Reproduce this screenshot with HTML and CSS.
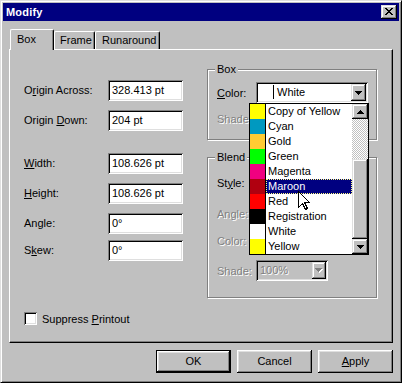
FILE: index.html
```html
<!DOCTYPE html>
<html>
<head>
<meta charset="utf-8">
<title>Modify</title>
<link rel="stylesheet" href="styles.css">
</head>
<body>
<div class="window">
  <div class="titlebar">
    <span class="title">Modify</span>
    <div class="close raised">
      <svg width="8" height="7" viewBox="0 0 8 7" shape-rendering="crispEdges"><path fill="#000" d="M0 0h2v1H0z M6 0h2v1H6z M1 1h2v1H1z M5 1h2v1H5z M2 2h4v1H2z M3 3h2v1H3z M2 4h4v1H2z M1 5h2v1H1z M5 5h2v1H5z M0 6h2v1H0z M6 6h2v1H6z"/></svg>
    </div>
  </div>

  <div class="tabs">
    <div class="tab tab-box active">Box</div>
    <div class="tab tab-frame">Frame</div>
    <div class="tab tab-run">Runaround</div>
  </div>

  <div class="panel">
    <div class="left">
      <div class="frow r1"><span class="flabel">O<u>r</u>igin Across:</span><div class="edit">328.413 pt</div></div>
      <div class="frow r2"><span class="flabel">Origin <u>D</u>own:</span><div class="edit">204 pt</div></div>
      <div class="frow r3"><span class="flabel"><u>W</u>idth:</span><div class="edit">108.626 pt</div></div>
      <div class="frow r4"><span class="flabel"><u>H</u>eight:</span><div class="edit">108.626 pt</div></div>
      <div class="frow r5"><span class="flabel">Angle:</span><div class="edit">0°</div></div>
      <div class="frow r6"><span class="flabel">S<u>k</u>ew:</span><div class="edit">0°</div></div>
      <div class="check-row">
        <div class="checkbox"></div>
        <span>Suppress <u>P</u>rintout</span>
      </div>
    </div>

    <div class="right">
      <div class="group box-group">
        <span class="legend">Box</span>
        <div class="grow g-color">
          <span class="glabel"><u>C</u>olor:</span>
          <div class="combo">
            <span class="combo-swatch"></span>
            <span class="combo-text">White</span>
            <span class="combo-btn raised">
              <svg width="7" height="4" viewBox="0 0 7 4" shape-rendering="crispEdges"><path fill="#000" d="M0 0h7v1H0z M1 1h5v1H1z M2 2h3v1H2z M3 3h1v1H3z"/></svg>
            </span>
          </div>
        </div>
        <div class="grow g-shade">
          <span class="glabel disabled">Shade:</span>
          <div class="combo combo-dis"></div>
        </div>
      </div>

      <div class="group blend-group">
        <span class="legend">Blend</span>
        <div class="grow b-style">
          <span class="glabel">St<u>y</u>le:</span>
          <div class="combo"></div>
        </div>
        <div class="grow b-angle">
          <span class="glabel disabled">Angle:</span>
          <div class="combo combo-dis"></div>
        </div>
        <div class="grow b-color">
          <span class="glabel disabled">Color:</span>
          <div class="combo combo-dis"></div>
        </div>
        <div class="grow b-shade">
          <span class="glabel disabled">Shade:</span>
          <div class="combo combo-dis combo-small">
            <span class="combo-text disabled">100%</span>
            <span class="combo-btn raised">
              <svg width="8" height="5" viewBox="0 0 8 5" shape-rendering="crispEdges"><path fill="#fff" d="M1 1h7v1H1z M2 2h5v1H2z M3 3h3v1H3z M4 4h1v1H4z"/><path fill="#808080" d="M0 0h7v1H0z M1 1h5v1H1z M2 2h3v1H2z M3 3h1v1H3z"/></svg>
            </span>
          </div>
        </div>
      </div>
    </div>
  </div>

  <div class="buttons">
    <div class="btn default">OK</div>
    <div class="btn">Cancel</div>
    <div class="btn"><span><u>A</u>pply</span></div>
  </div>
</div>

<div class="list">
  <div class="items">
    <div class="item"><span class="sw c-yellow"></span><span class="itext">Copy of Yellow</span></div>
    <div class="item"><span class="sw c-cyan"></span><span class="itext">Cyan</span></div>
    <div class="item"><span class="sw c-gold"></span><span class="itext">Gold</span></div>
    <div class="item"><span class="sw c-green"></span><span class="itext">Green</span></div>
    <div class="item"><span class="sw c-magenta"></span><span class="itext">Magenta</span></div>
    <div class="item selected"><span class="sw c-maroon"></span><span class="itext">Maroon</span></div>
    <div class="item"><span class="sw c-red"></span><span class="itext">Red</span></div>
    <div class="item"><span class="sw c-reg"></span><span class="itext">Registration</span></div>
    <div class="item"><span class="sw c-white"></span><span class="itext">White</span></div>
    <div class="item"><span class="sw c-yellow"></span><span class="itext">Yellow</span></div>
  </div>
  <div class="scrollbar">
    <div class="sb-btn raised">
      <svg width="7" height="4" viewBox="0 0 7 4" shape-rendering="crispEdges"><path fill="#000" d="M3 0h1v1H3z M2 1h3v1H2z M1 2h5v1H1z M0 3h7v1H0z"/></svg>
    </div>
    <div class="sb-track"></div>
    <div class="sb-thumb raised"></div>
    <div class="sb-btn raised">
      <svg width="7" height="4" viewBox="0 0 7 4" shape-rendering="crispEdges"><path fill="#000" d="M0 0h7v1H0z M1 1h5v1H1z M2 2h3v1H2z M3 3h1v1H3z"/></svg>
    </div>
  </div>
</div>

<svg class="cursor" width="13" height="20" viewBox="0 0 13 20" shape-rendering="crispEdges">
  <polygon points="0.5,0.5 0.5,16.5 4.5,12.5 7.5,18.5 9.5,17.5 6.5,11.5 11.5,11.5" fill="#fff" stroke="#000" stroke-width="1"/>
</svg>
</body>
</html>
```

FILE: styles.css
```css
* { box-sizing: border-box; }
html, body { margin: 0; padding: 0; }
body {
  width: 402px;
  height: 383px;
  background: #c0c0c0;
  font-family: "Liberation Sans", Arial, sans-serif;
  font-size: 11px;
  color: #000;
  position: relative;
  overflow: hidden;
}
u { text-decoration: underline; text-underline-offset: 1px; }

.raised {
  background: #c0c0c0;
  box-shadow: inset -1px -1px #000, inset 1px 1px #dfdfdf, inset -2px -2px #808080, inset 2px 2px #fff;
}
.disabled { color: #808080; text-shadow: 1px 1px #fff; }

.window {
  width: 402px;
  height: 383px;
  border: 1px solid;
  border-color: #dfdfdf #000 #000 #dfdfdf;
  box-shadow: inset 1px 1px #fff, inset -1px -1px #808080;
  padding: 2px;
  display: flex;
  flex-direction: column;
}

.titlebar {
  height: 18px;
  flex: none;
  background: #000080;
  display: flex;
  align-items: center;
  justify-content: space-between;
  padding: 0 2px 0 3px;
}
.title { color: #fff; font-weight: bold; font-size: 11px; letter-spacing: 0.2px; }
.close {
  width: 16px;
  height: 14px;
  display: flex;
  align-items: center;
  justify-content: center;
  padding-bottom: 1px;
}
.close svg { display: block; }

.tabs {
  display: flex;
  align-items: flex-end;
  height: 20px;
  flex: none;
  margin: 8px 0 0 7px;
  position: relative;
  z-index: 1;
}
.tab {
  height: 18px;
  background: #c0c0c0;
  border-top: 1px solid #fff;
  border-left: 1px solid #fff;
  border-right: 1px solid #000;
  border-radius: 2px 2px 0 0;
  box-shadow: inset -1px 0 #808080;
  line-height: 16px;
  white-space: nowrap;
}
.tab.active { height: 21px; margin-bottom: -1px; line-height: 18px; }
.tab-box { width: 44px; padding-left: 6px; }
.tab-frame { width: 41px; padding-left: 5px; }
.tab-run { width: 65px; padding-left: 6px; }

.panel {
  margin: 0 6px;
  height: 294px;
  flex: none;
  border-top: 1px solid #fff;
  border-left: 1px solid #fff;
  border-right: 1px solid #000;
  border-bottom: 1px solid #000;
  box-shadow: inset -1px -1px #808080;
  display: flex;
}

.left {
  width: 197px;
  padding: 30px 0 0 14px;
  display: flex;
  flex-direction: column;
}
.frow { display: flex; align-items: center; height: 20px; }
.r2 { margin-top: 10px; }
.r3 { margin-top: 23px; }
.r4 { margin-top: 10px; }
.r5 { margin-top: 10px; }
.r6 { margin-top: 7px; }
.flabel { width: 84px; white-space: nowrap; }
.edit {
  width: 75px;
  height: 21px;
  background: #fff;
  box-shadow: inset 1px 1px #808080, inset -1px -1px #fff, inset 2px 2px #000, inset -2px -2px #dfdfdf;
  padding: 0 3px 0 4px;
  line-height: 20px;
  white-space: nowrap;
}

.check-row {
  margin-top: 52px;
  display: flex;
  align-items: center;
  gap: 5px;
  height: 13px;
}
.checkbox {
  width: 13px;
  height: 13px;
  background: #fff;
  box-shadow: inset 1px 1px #808080, inset -1px -1px #fff, inset 2px 2px #000, inset -2px -2px #dfdfdf;
}

.right {
  width: 171px;
  padding-top: 19px;
  display: flex;
  flex-direction: column;
}
.group {
  width: 170px;
  border: 1px solid #808080;
  box-shadow: inset 1px 1px #fff, 1px 1px #fff;
  display: flex;
  flex-direction: column;
}
.box-group { height: 71px; }
.blend-group { height: 141px; margin-top: 17px; }
.legend {
  display: block;
  width: fit-content;
  height: 13px;
  line-height: 13px;
  margin: -7px 0 0 7px;
  padding: 0 2px;
  background: #c0c0c0;
}
.grow { display: flex; align-items: center; height: 21px; padding-left: 9px; }
.glabel { width: 39px; white-space: nowrap; }
.g-color { margin-top: 6px; }
.g-shade { margin-top: 5px; }
.b-style { margin-top: 8px; }
.b-angle { margin-top: 10px; }
.b-color { margin-top: 6px; }
.b-shade { margin-top: 9px; }

.combo {
  width: 112px;
  height: 21px;
  background: #fff;
  box-shadow: inset 1px 1px #808080, inset -1px -1px #fff, inset 2px 2px #000, inset -2px -2px #dfdfdf;
  padding: 2px;
  display: flex;
  align-items: stretch;
}
.combo-dis { background: #c0c0c0; }
.combo-small { width: 72px; }
.combo-swatch {
  width: 16px;
  flex: none;
  margin: 1px 0 2px;
  border-right: 1px solid #000;
}
.combo-text {
  flex: 1;
  padding-left: 3px;
  line-height: 16px;
  white-space: nowrap;
  overflow: hidden;
}
.combo-small .combo-text { padding-left: 2px; }
.combo-btn {
  width: 15px;
  flex: none;
  display: flex;
  align-items: center;
  justify-content: center;
}
.combo-small .combo-btn { width: 14px; }

.buttons {
  display: flex;
  justify-content: flex-end;
  gap: 6px;
  margin: 7px 6px 0 0;
}
.btn {
  width: 75px;
  height: 23px;
  display: flex;
  align-items: center;
  justify-content: center;
  background: #c0c0c0;
  box-shadow: inset -1px -1px #000, inset 1px 1px #fff, inset -2px -2px #808080, inset 2px 2px #dfdfdf;
  padding-bottom: 1px;
}
.btn.default {
  border: 1px solid #000;
  box-shadow: inset -1px -1px #000, inset 1px 1px #fff, inset -2px -2px #808080, inset 2px 2px #dfdfdf;
}

.list {
  position: absolute;
  left: 249px;
  top: 103px;
  width: 120px;
  height: 152px;
  border: 1px solid #000;
  background: #fff;
  display: flex;
  z-index: 5;
}
.items { width: 102px; display: flex; flex-direction: column; }
.item { height: 15px; display: flex; }
.sw { width: 16px; flex: none; border-right: 1px solid #000; }
.itext {
  flex: 1;
  padding-left: 2px;
  line-height: 15px;
  white-space: nowrap;
  overflow: hidden;
}
.item.selected .itext {
  background: #000080;
  color: #fff;
  outline: 1px dotted #ffff80;
  outline-offset: -1px;
}
.c-yellow { background: #ffff00; }
.c-cyan { background: #0099c0; }
.c-gold { background: #ffcc33; }
.c-green { background: #00ff00; }
.c-magenta { background: #f00080; }
.c-maroon { background: #b00010; }
.c-red { background: #ff0000; }
.c-reg { background: #000000; }
.c-white { background: #ffffff; }

.scrollbar { width: 16px; display: flex; flex-direction: column; }
.sb-btn {
  height: 15px;
  display: flex;
  align-items: center;
  justify-content: center;
}
.sb-track {
  flex: 1;
  background: repeating-conic-gradient(#c0c0c0 0 25%, #fff 0 50%) 0 0 / 2px 2px;
}
.sb-thumb { height: 80px; }

.cursor {
  position: absolute;
  left: 298px;
  top: 191px;
  z-index: 10;
}
```
